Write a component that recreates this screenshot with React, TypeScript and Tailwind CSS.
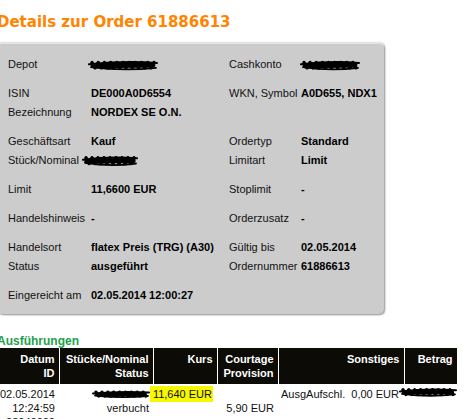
import React from 'react';

// blacked-out value, drawn as a marker scribble
const Scribble: React.FC<{ w: number; h: number; className?: string }> = ({ w, h, className }) => {
  const pts: string[] = [];
  const n = Math.max(8, Math.round(w / 3.5));
  for (let i = 0; i <= n; i++) {
    const x = 4 + ((w - 8) * i) / n;
    const y = i % 2 === 0 ? h * 0.32 : h * 0.7;
    pts.push(`${x.toFixed(1)},${y.toFixed(1)}`);
  }
  return (
    <svg width={w} height={h} viewBox={`0 0 ${w} ${h}`} className={className}>
      <path d={`M1 ${h * 0.45} Q ${w / 2} ${h * 0.2} ${w - 1} ${h * 0.35}`} stroke="#000" strokeWidth={2} fill="none" strokeLinecap="round" />
      <polyline points={pts.join(' ')} stroke="#000" strokeWidth={3.4} fill="none" strokeLinejoin="round" strokeLinecap="round" />
      <path d={`M5 ${h * 0.55} L ${w - 5} ${h * 0.5}`} stroke="#000" strokeWidth={h * 0.35} fill="none" strokeLinecap="round" />
      <path d={`M3 ${h * 0.65} Q ${w / 2} ${h * 0.95} ${w - 2} ${h * 0.7}`} stroke="#000" strokeWidth={1.8} fill="none" strokeLinecap="round" />
    </svg>
  );
};

type Cell = React.ReactNode;
const groups: [Cell, Cell, Cell, Cell][][] = [
  [['Depot', <Scribble w={70} h={14} className="-ml-[3px]" />, 'Cashkonto', <Scribble w={60} h={14} className="-ml-[1px]" />]],
  [
    ['ISIN', 'DE000A0D6554', 'WKN, Symbol', 'A0D655, NDX1'],
    ['Bezeichnung', 'NORDEX SE O.N.', '', ''],
  ],
  [
    ['Geschäftsart', 'Kauf', 'Ordertyp', 'Standard'],
    ['Stück/Nominal', <Scribble w={56} h={15} className="-ml-[9px]" />, 'Limitart', 'Limit'],
  ],
  [['Limit', '11,6600 EUR', 'Stoplimit', '-']],
  [['Handelshinweis', '-', 'Orderzusatz', '-']],
  [
    ['Handelsort', 'flatex Preis (TRG) (A30)', 'Gültig bis', '02.05.2014'],
    ['Status', 'ausgeführt', 'Ordernummer', '61886613'],
  ],
  [['Eingereicht am', '02.05.2014 12:00:27', '', '']],
];

const th = 'bg-[#0d0b06] text-white font-bold text-right align-top pt-[4px] pb-[4px] pr-[4px] border-r border-white';
const td = 'text-right align-top pt-[3px] pr-[4px] text-[#111]';

export default function App() {
  return (
    <div className="w-[468px] h-[419px] overflow-hidden bg-white font-['Liberation_Sans',Arial,sans-serif] text-[11px] text-[#111]">
      <div className="-ml-[3px]">
        <h1 className="mt-[13px] mb-[11px] text-[15px] leading-[18px] font-bold text-[#ff8400] font-['DejaVu_Sans',Verdana,sans-serif]">
          Details zur Order 61886613
        </h1>

        <div className="w-[387px] bg-[#cccccc] rounded-[5px] border-t-2 border-[#e4e4e4] shadow-[1px_1px_2px_#8f8f8f] pl-[11px] pt-[11px] pb-[9px]">
          {groups.map((rows, gi) => (
            <div key={gi} className={gi < groups.length - 1 ? 'mb-[10px]' : ''}>
              {rows.map((r, ri) => (
                <div key={ri} className="grid grid-cols-[83px_138px_72px_1fr] h-[19px] items-center leading-[19px]">
                  <div>{r[0]}</div>
                  <div className="font-bold text-black flex items-center">{r[1]}</div>
                  <div>{r[2]}</div>
                  <div className="font-bold text-black flex items-center">{r[3]}</div>
                </div>
              ))}
            </div>
          ))}
        </div>

        <h2 className="mt-[21px] text-[12px] leading-[13px] font-bold text-[#24a04a]">Ausführungen</h2>

        <table className="table-fixed border-collapse w-[460px] leading-[14px]">
          <colgroup>
            <col className="w-[62px]" />
            <col className="w-[94px]" />
            <col className="w-[64px]" />
            <col className="w-[61px]" />
            <col className="w-[126px]" />
            <col className="w-[53px]" />
          </colgroup>
          <thead>
            <tr>
              <th className={th}>Datum<br />ID</th>
              <th className={th}>Stücke/Nominal<br />Status</th>
              <th className={th}>Kurs</th>
              <th className={th}>Courtage<br />Provision</th>
              <th className={th}>Sonstiges</th>
              <th className={th + ' pr-[3px]'}>Betrag</th>
            </tr>
          </thead>
          <tbody>
            <tr>
              <td className={td}>02.05.2014<br />12:24:59<br />28040000</td>
              <td className={td}>
                <div className="flex justify-end h-[14px] items-center -mr-[1px]">
                  <Scribble w={58} h={10} />
                </div>
                verbucht
              </td>
              <td className={td}>
                <span className="bg-[#f7f700] pl-[3px] pr-[1px] pt-[2px] pb-[2px] -ml-[4px]">11,640 EUR</span>
              </td>
              <td className={td}>
                <br />5,90 EUR
              </td>
              <td className={td + ' whitespace-pre pr-[5px]'}>AusgAufschl.  0,00 EUR</td>
              <td className="align-top pt-[2px]">
                <Scribble w={58} h={12} className="-ml-[5px]" />
              </td>
            </tr>
          </tbody>
        </table>
      </div>
    </div>
  );
}
